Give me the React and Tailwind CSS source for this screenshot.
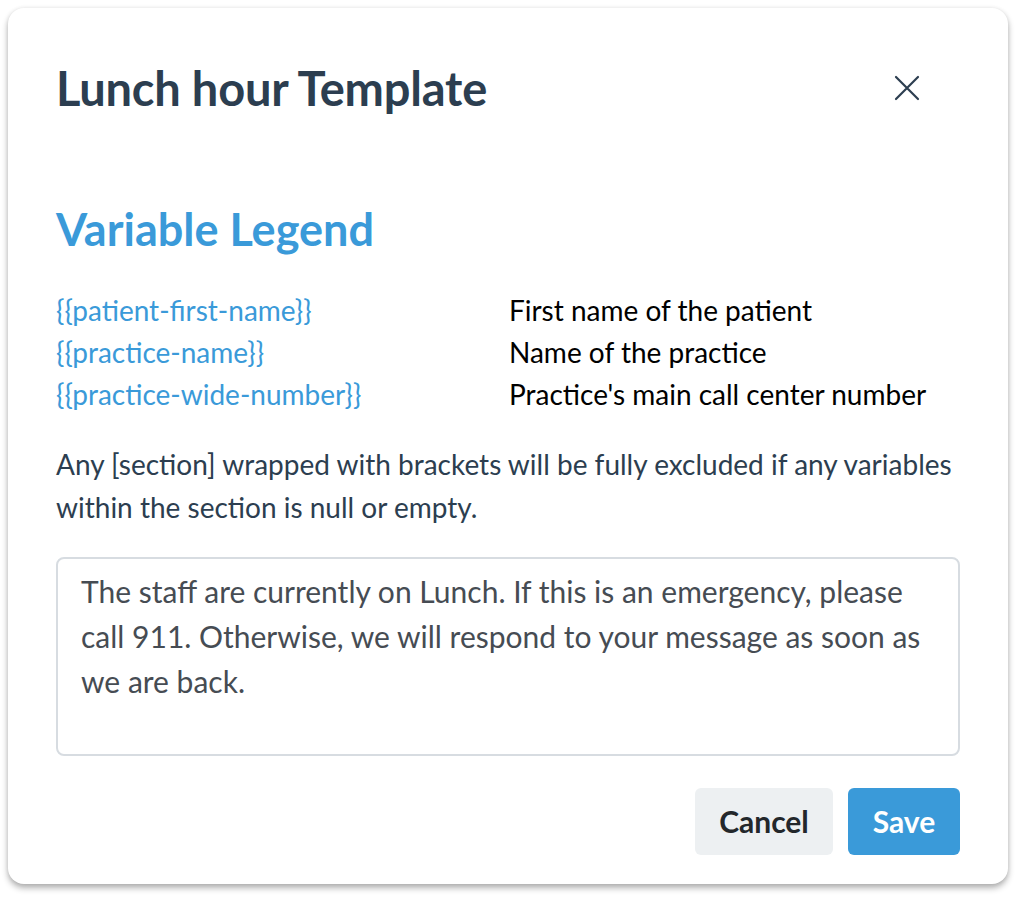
import React from 'react';

const variables = [
  { name: '{{patient-first-name}}', desc: 'First name of the patient' },
  { name: '{{practice-name}}', desc: 'Name of the practice' },
  { name: '{{practice-wide-number}}', desc: "Practice's main call center number" },
];

const App = () => {
  return (
    <div className="min-h-screen bg-white p-2 font-['Lato',sans-serif]">
      <div className="w-[1000px] h-[876px] bg-white rounded-2xl shadow-[0_4px_6px_rgba(0,0,0,0.3),0_0_4px_rgba(0,0,0,0.08)] px-12 pt-[54px] flex flex-col">
        <div className="flex items-center justify-between">
          <h1 className="text-[47px] leading-[52px] font-bold tracking-[-0.2px] text-[#2c3e50]">Lunch hour Template</h1>
          <button className="mr-[40px] text-[#2c3e50]">
            <svg width="26" height="26" viewBox="0 0 26 26" fill="none" stroke="currentColor" strokeWidth="2.2" strokeLinecap="round">
              <path d="M2 2L24 24M24 2L2 24" />
            </svg>
          </button>
        </div>

        <h2 className="mt-[91px] text-[45px] leading-[48px] font-bold text-[#3a9ad9]">Variable Legend</h2>

        <div className="mt-[36px] flex flex-col">
          {variables.map(v => (
            <div key={v.name} className="flex text-[28px] leading-[42px]">
              <span className="w-[453px] text-[#3a9ad9]">{v.name}</span>
              <span className="text-black">{v.desc}</span>
            </div>
          ))}
        </div>

        <p className="mt-[28px] text-[28px] leading-[43px] text-[#2c3e50]">
          Any [section] wrapped with brackets will be fully excluded if any variables within the section is null or empty.
        </p>

        <textarea
          className="mt-[28px] h-[199px] w-full resize-none rounded-lg border-2 border-[#d7dce1] px-[23px] py-[10px] text-[30px] leading-[45px] text-[#464c53] focus:outline-none"
          defaultValue="The staff are currently on Lunch. If this is an emergency, please call 911. Otherwise, we will respond to your message as soon as we are back."
        />

        <div className="mt-[32px] flex justify-end gap-[15px]">
          <button className="h-[67px] w-[138px] rounded-md bg-[#edf0f2] text-[30px] font-bold text-[#23272b]">Cancel</button>
          <button className="h-[67px] w-[112px] rounded-md bg-[#3a9ad9] text-[30px] font-bold text-white">Save</button>
        </div>
      </div>
    </div>
  );
};

export default App;
